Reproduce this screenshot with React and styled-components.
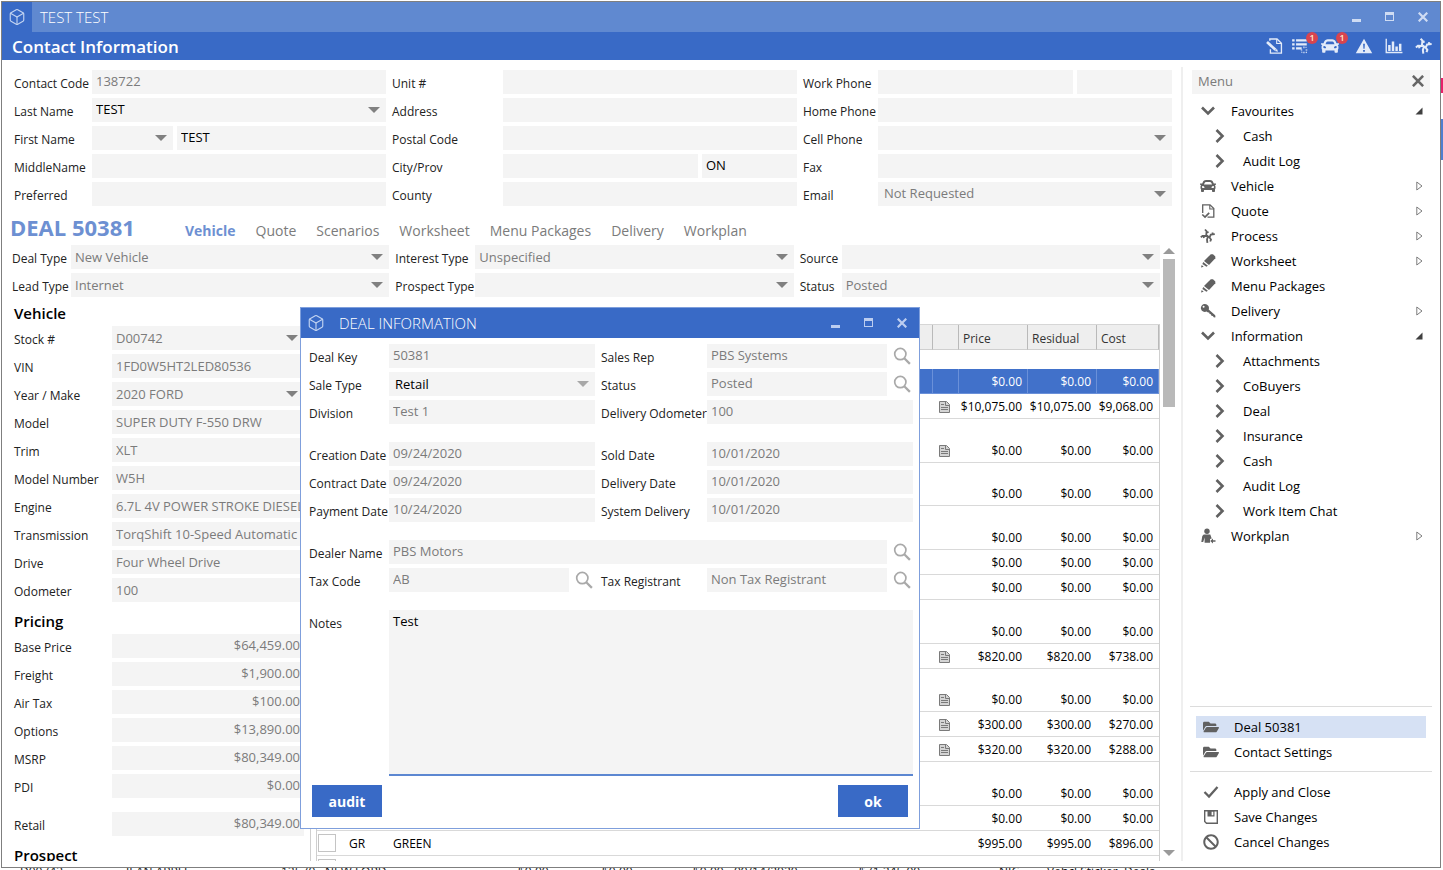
import React, { useId } from "react";
import styled, { createGlobalStyle, css } from "styled-components";
import { Box } from "lucide-react";
import { FaCar, FaFolderOpen, FaBan } from "react-icons/fa";

const BLUE = "#396ac6";
const FIELD = "#f4f4f4";
const MUTED = "#7b7b7b";

const GlobalStyle = createGlobalStyle`
  * { box-sizing: border-box; }
  html, body, #root { height: 100%; }
  body {
    margin: 0;
    background: #fff;
    color: #111;
    font-family: "Open Sans", "Noto Sans", sans-serif;
    font-size: 13px;
    line-height: 16px;
  }
  button, input, select, textarea { font: inherit; border: 0; border-radius: 0; margin: 0; padding: 0; }
  button { background: none; cursor: pointer; }
  svg { display: block; flex: none; }
`;

/* ---------- icons ---------- */

const Svg = ({ size = 16, children, ...rest }) => (
  <svg width={size} height={size} viewBox="0 0 16 16" fill="currentColor" aria-hidden="true" {...rest}>
    {children}
  </svg>
);

const ChevronDown = () => (
  <Svg>
    <path d="M2 4.5 8 10.5 14 4.5" fill="none" stroke="currentColor" strokeWidth="2.6" />
  </Svg>
);
const ChevronRight = () => (
  <Svg>
    <path d="M4.5 2 10.5 8 4.5 14" fill="none" stroke="currentColor" strokeWidth="2.6" />
  </Svg>
);
const PageCheck = () => (
  <Svg>
    <path d="M2.700 10V1.900H10L13.800 5.600V14.200H7.500" fill="none" stroke="currentColor" strokeWidth="1.300" />
    <path d="M9.800 2v4h4" fill="none" stroke="currentColor" strokeWidth="1.100" />
    <path d="M2.300 11.500 5 14 9.200 9.800" fill="none" stroke="currentColor" strokeWidth="1.700" />
  </Svg>
);
const PagePen = ({ size }) => (
  <Svg size={size}>
    <path d="M4.300 3.300V1.800H10.700L14.600 5.500V14.300H4.800V10.800" fill="none" stroke="currentColor" strokeWidth="1.200" />
    <path d="M10.400 1.800V5.800H14.400" fill="none" stroke="currentColor" strokeWidth="1" />
    <path d="M1.800 4.400 9.300 11.400" stroke="currentColor" strokeWidth="2.400" />
    <path d="M10.600 10.400 11.600 13.200 8.700 12.400Z" />
  </Svg>
);
const Process = ({ size }) => (
  <Svg size={size}>
    <path
      d="M5 1.500 6.600 3.200 6.200 7.500M6.600 4.600 8.600 4M.8 9.300 2.600 7.800 8 8M3.400 7.800 4 10M6.800 7.800 9.600 9.200 10.800 6.600 14.800 6.200M12.400 6.300 12.600 4.500M8 8.600 7 11.500 7.400 14.800M9.200 9 11 11.500 10.200 13.500"
      fill="none"
      stroke="currentColor"
      strokeWidth="1.800"
    />
  </Svg>
);
const Marker = () => (
  <Svg>
    <path d="M10.800 1.300H13L15.300 3.600V5.200L9 12 4 8Z" />
    <path d="M3.200 9 7.900 12.700 6.400 13.800 2.400 10.900Z" />
    <path d="M1.700 12.100 3.700 13.700 1 14.600Z" />
  </Svg>
);
const Key = () => (
  <Svg>
    <path
      fillRule="evenodd"
      d="M5 1a4 4 0 1 0 1.600 7.600L8 9.500 9.200 9.600 9.600 11 10.900 11.200 11.400 12.700 12.800 13 14 14.500 15.500 14.200 15.200 12.200 8.700 6.400A4 4 0 0 0 5 1ZM3.600 2.800a1 1 0 1 1 0 2 1 1 0 0 1 0-2Z"
    />
  </Svg>
);
const Person = () => (
  <Svg>
    <circle cx="7" cy="3.200" r="2.700" />
    <path d="M3.700 6.600H10.300L11.700 10.400 10 11V14.800H4.600V9.500L3.200 14H1.300L2.300 8Z" />
    <path d="M10.200 13 13 10.500V12.200H15.500V13.800H13V15.500Z" />
  </Svg>
);
const Tick = () => (
  <Svg>
    <path d="M1.500 8 6 12.500 14.500 3" fill="none" stroke="currentColor" strokeWidth="2.300" />
  </Svg>
);
const Floppy = () => (
  <Svg>
    <path d="M1.700 1.700H14.300V14.300H3.500L1.700 12.500Z" fill="none" stroke="currentColor" strokeWidth="1.400" />
    <path fillRule="evenodd" d="M4.500 1.500H11.500V7.500H4.500ZM8.600 2.500V6.200H10.300V2.500Z" />
  </Svg>
);
const Search = () => (
  <Svg size={18}>
    <circle cx="6.500" cy="6.300" r="5" fill="none" stroke="currentColor" strokeWidth="1.500" />
    <path d="M10 10 15 15" stroke="currentColor" strokeWidth="2" />
  </Svg>
);
const Note = () => (
  <svg width="11" height="12" viewBox="0 0 11 12" aria-hidden="true">
    <path d="M.5.5H7.500L10.500 3.500V11.500H.5Z" fill="#d4d4d4" stroke="#7a7a7a" />
    <path d="M2 3.500H5M2 6.500H9M2 8.500H9M6.500 1V4.500H10" fill="none" stroke="#7a7a7a" />
  </svg>
);
const ListIcon = () => (
  <Svg size={18}>
    <path d="M1 2H3.200V4H1ZM4.500 2H14V4H4.500ZM1 5.500H3.200V7.500H1ZM4.500 5.500H14V7.500H4.500ZM1 9H3.200V11H1ZM4.500 9H9.500V11H4.500Z" />
    <path d="M11.500 8.500V10M11.500 13V14.500M8.700 11.500H10M13 11.500H14.500M13 9.500 13.700 8.900M13.200 13.200 14 14M9.300 13.800 10 13.200" stroke="currentColor" fill="none" />
  </Svg>
);
const Warning = () => (
  <Svg size={18}>
    <path fillRule="evenodd" d="M8 1.500 15.300 14.500H.7ZM7.200 6 7.500 10.500H8.500L8.800 6ZM7.200 11.500V13H8.800V11.500Z" />
  </Svg>
);
const Bars = () => (
  <Svg size={18}>
    <path d="M.5 1.500H1.700V13.200H15.500V14.500H.5Z" />
    <path d="M2.800 7H5V12.400H2.800ZM6 4H8.200V12.400H6ZM9.200 8.500H11.400V12.400H9.200ZM12.400 6H14.600V12.400H12.400Z" />
  </Svg>
);
const Minimize = () => (
  <svg width="10" height="10" viewBox="0 0 10 10" fill="currentColor" aria-hidden="true">
    <path d="M0 7H9V10H0Z" />
  </svg>
);
const Maximize = () => (
  <svg width="10" height="10" viewBox="0 0 10 10" fill="currentColor" aria-hidden="true">
    <path fillRule="evenodd" d="M0 0H9V9H0ZM1 3V8H8V3Z" />
  </svg>
);
const Close = ({ size = 10 }) => (
  <svg width={size} height={size} viewBox="0 0 10 10" aria-hidden="true">
    <path d="M.7.7 9.300 9.300M9.300.7.7 9.300" stroke="currentColor" strokeWidth="2.200" />
  </svg>
);

/* ---------- application frame ---------- */

const Desktop = styled.div`
  position: relative;
  height: 100vh;
  min-height: 600px;
  padding: 1px 2px 2px 1px;
  background: #fff;
  overflow: hidden;
`;

const BackgroundRow = styled.div`
  position: absolute;
  left: 0;
  right: 0;
  bottom: 0;
  height: 2px;
  padding-left: 20px;
  overflow: hidden;
  display: flex;
  font-size: 12px;
  line-height: 8px;
  white-space: nowrap;
`;

const BackgroundCell = styled.span`
  flex: none;
  width: ${(p) => p.$w}px;
`;

const BackgroundEdge = styled.div`
  position: absolute;
  top: 78px;
  right: 0;
  width: 2px;
  display: flex;
  flex-direction: column;
  gap: 26px;
`;

const EdgeMark = styled.span`
  height: ${(p) => p.$h}px;
  background: ${(p) => p.$color};
`;

const Window = styled.div`
  position: relative;
  height: 100%;
  border: 1px solid #7f7f7f;
  background: #fff;
  display: flex;
  flex-direction: column;
`;

const TitleBar = styled.header`
  height: 30px;
  flex: none;
  display: flex;
  align-items: center;
  background: ${(p) => (p.$dialog ? BLUE : "#6089d0")};
  color: #fff;
  font-size: 15px;
  font-weight: 300;
`;

const Logo = styled.span`
  width: 30px;
  height: 30px;
  display: grid;
  place-items: center;
  background: ${BLUE};
  color: #c3d4f1;
`;

const TitleText = styled.span`
  flex: 1;
  padding-left: 8px;
`;

const WindowButtons = styled.div`
  display: flex;
  gap: 22px;
  padding-right: 11px;
  color: ${(p) => (p.$dialog ? "#bccdf0" : "#cfdcf3")};
  button { color: inherit; width: 11px; }
`;

const PageHeader = styled.div`
  height: 28px;
  flex: none;
  display: flex;
  align-items: center;
  justify-content: space-between;
  padding: 0 7px 0 10px;
  background: ${BLUE};
  color: #fff;
`;

const PageTitle = styled.h1`
  margin: 0;
  padding-top: 2px;
  font-size: 17px;
  line-height: 24px;
  font-weight: 600;
`;

const HeaderTools = styled.div`
  display: flex;
  gap: 12px;
  color: #e3ebf9;
`;

const ToolButton = styled.button`
  position: relative;
  color: inherit;
  width: ${(p) => (p.$badged ? 22 : 18)}px;
  height: 18px;
  && { margin-left: ${(p) => (p.$badged ? -4 : 0)}px; }
`;

const Badge = styled.span`
  position: absolute;
  top: -5px;
  left: 15px;
  width: 12px;
  height: 12px;
  border-radius: 6px;
  background: #d8454f;
  color: #ffe9d0;
  font-size: 9px;
  line-height: 12px;
  font-weight: 600;
  text-align: center;
`;

const Body = styled.div`
  flex: 1;
  min-height: 0;
  display: flex;
  padding: 7px 0 6px;
`;

const Main = styled.main`
  flex: 1;
  min-width: 0;
  display: flex;
  flex-direction: column;
  padding: 3px 6px 0 0;
`;

/* ---------- form parts ---------- */

const Groups = styled.div`
  display: flex;
  gap: 6px;
`;

const Group = styled.div`
  flex: 1 1 ${(p) => p.$label}px;
  min-width: 0;
  display: grid;
  grid-template-columns: ${(p) => p.$label}px minmax(0, 1fr);
  grid-auto-rows: 24px;
  row-gap: 4px;
`;

const Label = styled.label`
  padding-top: 6px;
  font-size: 12px;
  line-height: 16px;
  color: #222;
  white-space: nowrap;
`;

const Cells = styled.div`
  display: flex;
  gap: 4px;
  min-width: 0;
`;

const control = css`
  width: 100%;
  height: 24px;
  min-width: 0;
  padding: 0 4px ${(p) => (p.$right ? 3 : 1)}px;
  background: ${FIELD};
  color: ${(p) => (p.$dark ? "#000" : MUTED)};
  opacity: 1;
  text-align: ${(p) => (p.$right ? "right" : "left")};
  outline: none;
`;

const TextInput = styled.input`
  ${control}
`;

const SelectInput = styled.select`
  ${control}
  appearance: none;
  grid-area: 1 / 1;
  padding-left: ${(p) => (p.$inset ? 6 : 4)}px;
`;

const SelectBox = styled.div`
  display: grid;
  align-items: center;
  justify-items: end;
  width: 100%;
  svg {
    grid-area: 1 / 1;
    margin-right: 6px;
    pointer-events: none;
    color: ${(p) => (p.$light ? "#a8a8a8" : "#808080")};
  }
`;

const Cell = styled.div`
  flex: ${(p) => p.$flex || 1} 1 0;
  min-width: 0;
  display: flex;
`;

function Control({ id, name, value = "", select, dark, right, inset, light }) {
  if (!select) {
    return <TextInput id={id} aria-label={name} defaultValue={value} readOnly={!dark} $dark={dark} $right={right} />;
  }
  return (
    <SelectBox $light={light}>
      <SelectInput id={id} aria-label={name} defaultValue={value} $dark={dark} $inset={inset}>
        <option>{value}</option>
      </SelectInput>
      <svg width="12" height="6" viewBox="0 0 12 6" fill="currentColor" aria-hidden="true">
        <path d="M0 0H12L6 6Z" />
      </svg>
    </SelectBox>
  );
}

function Field({ label, cells, ...props }) {
  const id = useId();
  return (
    <>
      <Label htmlFor={id}>{label}</Label>
      {cells ? (
        <Cells>
          {cells.map((c, i) => (
            <Cell key={i} $flex={c.flex}>
              <Control id={i ? undefined : id} name={i ? c.name : undefined} {...c} />
            </Cell>
          ))}
        </Cells>
      ) : (
        <Control id={id} {...props} />
      )}
    </>
  );
}

const ContactForm = styled(Groups)`
  padding-left: 12px;
  padding-right: 3px;
  input, select { padding-bottom: 3px; }
`;

/* ---------- deal section ---------- */

const DealHeader = styled.div`
  display: flex;
  align-items: center;
  height: 39px;
  flex: none;
  padding: 2px 0 0 8px;
`;

const DealTitle = styled.h2`
  margin: 0;
  width: 175px;
  font-size: 22px;
  line-height: 30px;
  font-weight: 700;
  color: #6d90d2;
`;

const Tabs = styled.nav`
  display: flex;
  gap: 20px;
  padding-top: 8px;
`;

const Tab = styled.a`
  font-size: 14px;
  line-height: 20px;
  text-decoration: none;
  color: ${(p) => (p.$active ? "#6d90d2" : MUTED)};
  font-weight: ${(p) => (p.$active ? 700 : 400)};
`;

const ScrollRegion = styled.div`
  flex: 1;
  min-height: 0;
  display: flex;
  gap: 3px;
`;

const ScrollContent = styled.div`
  flex: 1;
  min-width: 0;
  overflow: hidden;
`;

const ScrollTrack = styled.div`
  width: 12px;
  flex: none;
  display: flex;
  flex-direction: column;
  align-items: center;
  padding: 3px 0 5px;
  color: #9a9a9a;
`;

const ScrollThumb = styled.div`
  width: 12px;
  height: 148px;
  margin: 5px 0 auto;
  background: #b9b9b9;
`;

const DealForm = styled(Groups)`
  padding-left: 10px;
`;

const DealBody = styled.div`
  display: flex;
  padding-top: 4px;
`;

const DetailPanel = styled.section`
  width: 308px;
  flex: none;
  padding: 0 6px 0 12px;
`;

const Splitter = styled.div`
  width: 1px;
  flex: none;
  margin-top: 23px;
  background: #cfcfcf;
`;

const SectionTitle = styled.h3`
  margin: 0;
  height: 25px;
  font-size: 15px;
  line-height: 24px;
  font-weight: 600;
  color: #000;
`;

const PanelFields = styled.div`
  display: grid;
  grid-template-columns: 98px minmax(0, 1fr);
  grid-auto-rows: 24px;
  row-gap: 4px;
  margin-bottom: ${(p) => p.$after || 7}px;
`;

const TablePanel = styled.section`
  flex: 1;
  min-width: 0;
  padding: 23px 0 0 5px;
`;

const Table = styled.table`
  width: 100%;
  table-layout: fixed;
  border-collapse: separate;
  border-spacing: 0;
  border: 1px solid #cfcfcf;
  border-top-color: #d6d6d6;
  font-size: 12px;
  line-height: 16px;
  color: #000;
`;

const HeadCell = styled.th`
  height: 25px;
  padding: 3px 4px 0;
  background: #eee;
  border-right: 1px solid #b9b9b9;
  border-bottom: 1px solid #cfcfcf;
  font-weight: 400;
  text-align: left;
  color: #333;
`;

const GapCell = styled.td`
  height: ${(p) => p.$h}px;
  padding: 0;
`;

const DataCell = styled.td`
  height: 25px;
  padding: 2px 6px 0 ${(p) => (p.$align ? 0 : 6)}px;
  text-align: ${(p) => p.$align || "left"};
  border-bottom: 1px solid #d9d9d9;
  ${(p) =>
    p.$selected &&
    css`
      background: #4171ca;
      color: #fff;
      border-right: 1px solid #6a90d9;
      border-bottom: 1px solid #6a90d9;
      padding-right: 5px;
    `}
`;

const CheckCell = styled(DataCell)`
  padding: 0 1px;
`;

const Check = styled.input`
  appearance: none;
  display: block;
  width: 18px;
  height: 18px;
  && { border: 1px solid #c4c4c4; }
  background: #fff;
`;

/* ---------- side menu ---------- */

const Side = styled.aside`
  width: 259px;
  flex: none;
  display: flex;
  flex-direction: column;
  border-left: 2px solid #efefef;
  padding: 3px 8px 0 7px;
`;

const MenuHead = styled.div`
  display: flex;
  align-items: center;
  justify-content: space-between;
  height: 24px;
  margin: 0 2px 4px;
  padding: 0 6px 2px;
  background: ${FIELD};
  color: ${MUTED};
  button { color: #666; }
`;

const MenuList = styled.nav`
  display: flex;
  flex-direction: column;
  padding: 0 6px;
`;

const MenuItem = styled.a`
  display: flex;
  align-items: center;
  height: ${(p) => (p.$selected ? 22 : 25)}px;
  margin: ${(p) => (p.$selected ? "2px 0 1px" : 0)};
  gap: 15px;
  padding-left: ${(p) => (p.$child ? 16 : 4)}px;
  padding-right: 3px;
  background: ${(p) => (p.$selected ? "#d6e1f4" : "none")};
  color: #000;
  text-decoration: none;
  > svg:first-child { color: #616161; }
  span { flex: 1; }
`;

const Bottom = styled.div`
  margin-top: auto;
`;

const ActionList = styled(MenuList)`
  border-top: 1px solid #dcdcdc;
  padding-top: 7px;
  padding-bottom: 7px;
  ${MenuItem} { padding-left: 7px; }
`;

const Expander = ({ open }) =>
  open ? (
    <svg width="8" height="8" viewBox="0 0 8 8" aria-hidden="true">
      <path d="M7.500.5V7.500H.5Z" fill="#404040" />
    </svg>
  ) : (
    <svg width="7" height="10" viewBox="0 0 7 10" aria-hidden="true">
      <path d="M.8 1 6 5 .8 9Z" fill="#fff" stroke="#7c7c7c" />
    </svg>
  );

/* ---------- dialog ---------- */

const Dialog = styled.div`
  position: absolute;
  left: 298px;
  top: 305px;
  width: 620px;
  max-width: 100%;
  border: 1px solid #7f9fdc;
  background: #fff;
  ${Logo} { background: none; }
`;

const DialogForm = styled.div`
  display: flex;
  flex-direction: column;
  gap: 18px;
  padding: 6px 6px 9px 8px;
  input { padding-bottom: 3px; }
`;

const Rows = styled.div`
  display: grid;
  grid-template-columns: 80px minmax(0, 212fr) 106px minmax(0, 206fr);
  grid-auto-rows: minmax(24px, auto);
  row-gap: 4px;
`;

const Lookup = styled.div`
  display: flex;
  align-items: center;
  gap: 6px;
  grid-column: ${(p) => (p.$wide ? "span 3" : "auto")};
  padding-right: ${(p) => (p.$inner ? 8 : 2)}px;
  button { color: #a9a9a9; width: 18px; height: 18px; flex: none; }
`;

const Inset = styled.div`
  padding-right: ${(p) => (p.$first ? 6 : 0)}px;
  display: flex;
  min-width: 0;
`;

const Notes = styled.textarea`
  grid-column: span 3;
  height: 166px;
  && { padding: 3px 4px; }
  resize: none;
  background: ${FIELD};
  && { border-bottom: 2px solid #5c87d1; }
  color: #000;
  outline: none;
`;

const DialogFooter = styled.footer`
  display: flex;
  justify-content: space-between;
  padding: 0 11px 11px;
`;

const PrimaryButton = styled.button`
  width: 70px;
  height: 32px;
  && { padding-top: 2px; }
  background: ${BLUE};
  color: #fff;
  font-size: 14px;
  font-weight: 700;
`;

function DialogField({ label, first, lookup, wide, ...props }) {
  const id = useId();
  return (
    <>
      <Label htmlFor={id}>{label}</Label>
      {lookup ? (
        <Lookup $wide={wide} $inner={first && !wide}>
          <Control id={id} {...props} />
          <button type="button" aria-label={"Find " + label}>
            <Search />
          </button>
        </Lookup>
      ) : (
        <Inset $first={first}>
          <Control id={id} {...props} />
        </Inset>
      )}
    </>
  );
}

/* ---------- data ---------- */

const MENU = [
  ["Favourites", ChevronDown, "open"],
  ["Cash", ChevronRight, "child"],
  ["Audit Log", ChevronRight, "child"],
  ["Vehicle", FaCar, "closed"],
  ["Quote", PageCheck, "closed"],
  ["Process", Process, "closed"],
  ["Worksheet", Marker, "closed"],
  ["Menu Packages", Marker],
  ["Delivery", Key, "closed"],
  ["Information", ChevronDown, "open"],
  ["Attachments", ChevronRight, "child"],
  ["CoBuyers", ChevronRight, "child"],
  ["Deal", ChevronRight, "child"],
  ["Insurance", ChevronRight, "child"],
  ["Cash", ChevronRight, "child"],
  ["Audit Log", ChevronRight, "child"],
  ["Work Item Chat", ChevronRight, "child"],
  ["Workplan", Person, "closed"],
];

const ZERO = ["$0.00", "$0.00", "$0.00"];
const ITEMS = [
  { gap: 19 },
  { prices: ZERO, selected: true },
  { prices: ["$10,075.00", "$10,075.00", "$9,068.00"], note: true },
  { gap: 19 },
  { prices: ZERO, note: true },
  { gap: 18 },
  { prices: ZERO },
  { gap: 19 },
  { prices: ZERO },
  { prices: ZERO },
  { prices: ZERO },
  { gap: 19 },
  { prices: ZERO },
  { prices: ["$820.00", "$820.00", "$738.00"], note: true },
  { gap: 18 },
  { prices: ZERO, note: true },
  { prices: ["$300.00", "$300.00", "$270.00"], note: true },
  { prices: ["$320.00", "$320.00", "$288.00"], note: true },
  { gap: 19 },
  { prices: ZERO },
  { prices: ZERO },
  { code: "GR", name: "GREEN", prices: ["$995.00", "$995.00", "$896.00"] },
  { prices: ["", "", ""] },
];

const VEHICLE = [
  ["Stock #", "D00742", true],
  ["VIN", "1FD0W5HT2LED80536"],
  ["Year / Make", "2020 FORD", true],
  ["Model", "SUPER DUTY F-550 DRW"],
  ["Trim", "XLT"],
  ["Model Number", "W5H"],
  ["Engine", "6.7L 4V POWER STROKE DIESEL"],
  ["Transmission", "TorqShift 10-Speed Automatic -"],
  ["Drive", "Four Wheel Drive"],
  ["Odometer", "100"],
];

const PRICING = [
  ["Base Price", "$64,459.00"],
  ["Freight", "$1,900.00"],
  ["Air Tax", "$100.00"],
  ["Options", "$13,890.00"],
  ["MSRP", "$80,349.00"],
  ["PDI", "$0.00"],
];

const TABS = ["Vehicle", "Quote", "Scenarios", "Worksheet", "Menu Packages", "Delivery", "Workplan"];

const BACKGROUND = [
  ["D00743", 106],
  ["JEAN APPLE", 155],
  ["12570", 44],
  ["NEW FORD", 193],
  ["$0.00", 84],
  ["$0.00", 91],
  ["$0.00", 41],
  ["09/14/2020", 125],
  ["$71,245.00", 140],
  ["NIC", 48],
  ["Vehcl Sticker", 77],
  ["Deals", 60],
];

function Controls({ dialog }) {
  return (
    <WindowButtons $dialog={dialog}>
      <button type="button" aria-label="Minimize"><Minimize /></button>
      <button type="button" aria-label="Maximize"><Maximize /></button>
      <button type="button" aria-label="Close"><Close /></button>
    </WindowButtons>
  );
}

function SideMenu() {
  return (
    <Side>
      <MenuHead>
        <span>Menu</span>
        <button type="button" aria-label="Close menu"><Close size={12} /></button>
      </MenuHead>
      <MenuList>
        {MENU.map(([text, Icon, kind], i) => (
          <MenuItem href="#" key={i} $child={kind === "child"}>
            <Icon size={16} />
            <span>{text}</span>
            {(kind === "open" || kind === "closed") && <Expander open={kind === "open"} />}
          </MenuItem>
        ))}
      </MenuList>
      <Bottom>
        <ActionList>
          <MenuItem href="#" $selected><FaFolderOpen size={16} /><span>Deal 50381</span></MenuItem>
          <MenuItem href="#"><FaFolderOpen size={16} /><span>Contact Settings</span></MenuItem>
        </ActionList>
        <ActionList>
          <MenuItem href="#"><Tick /><span>Apply and Close</span></MenuItem>
          <MenuItem href="#"><Floppy /><span>Save Changes</span></MenuItem>
          <MenuItem href="#"><FaBan size={16} /><span>Cancel Changes</span></MenuItem>
        </ActionList>
      </Bottom>
    </Side>
  );
}

function ItemTable() {
  return (
    <Table>
      <colgroup>
        <col width="26" />
        <col width="44" />
        <col />
        <col width="26" />
        <col width="69" />
        <col width="69" />
        <col width="62" />
      </colgroup>
      <thead>
        <tr>
          <HeadCell /><HeadCell /><HeadCell /><HeadCell />
          <HeadCell>Price</HeadCell>
          <HeadCell>Residual</HeadCell>
          <HeadCell>Cost</HeadCell>
        </tr>
      </thead>
      <tbody>
        {ITEMS.map((item, i) =>
          item.gap ? (
            <tr key={i}><GapCell colSpan={7} $h={item.gap} /></tr>
          ) : (
            <tr key={i}>
              <CheckCell $selected={item.selected}><Check type="checkbox" aria-label="Select item" /></CheckCell>
              <DataCell $selected={item.selected}>{item.code}</DataCell>
              <DataCell $selected={item.selected}>{item.name}</DataCell>
              <DataCell $selected={item.selected}>{item.note && <Note />}</DataCell>
              {item.prices.map((p, n) => (
                <DataCell key={n} $align="right" $selected={item.selected}>{p}</DataCell>
              ))}
            </tr>
          )
        )}
      </tbody>
    </Table>
  );
}

function DealInformation() {
  const notesId = useId();
  return (
    <Dialog role="dialog" aria-label="Deal information">
      <TitleBar $dialog>
        <Logo><Box size={18} strokeWidth={1.5} /></Logo>
        <TitleText>DEAL INFORMATION</TitleText>
        <Controls dialog />
      </TitleBar>
      <DialogForm>
        <Rows>
          <DialogField label="Deal Key" value="50381" first />
          <DialogField label="Sales Rep" value="PBS Systems" lookup />
          <DialogField label="Sale Type" value="Retail" select dark inset light first />
          <DialogField label="Status" value="Posted" lookup />
          <DialogField label="Division" value="Test 1" first />
          <DialogField label="Delivery Odometer" value="100" />
        </Rows>
        <Rows>
          <DialogField label="Creation Date" value="09/24/2020" first />
          <DialogField label="Sold Date" value="10/01/2020" />
          <DialogField label="Contract Date" value="09/24/2020" first />
          <DialogField label="Delivery Date" value="10/01/2020" />
          <DialogField label="Payment Date" value="10/24/2020" first />
          <DialogField label="System Delivery" value="10/01/2020" />
        </Rows>
        <Rows>
          <DialogField label="Dealer Name" value="PBS Motors" lookup wide first />
          <DialogField label="Tax Code" value="AB" lookup first />
          <DialogField label="Tax Registrant" value="Non Tax Registrant" lookup />
        </Rows>
        <Rows>
          <Label htmlFor={notesId}>Notes</Label>
          <Notes id={notesId} defaultValue="Test" />
        </Rows>
      </DialogForm>
      <DialogFooter>
        <PrimaryButton type="button">audit</PrimaryButton>
        <PrimaryButton type="button">ok</PrimaryButton>
      </DialogFooter>
    </Dialog>
  );
}

export default function App() {
  return (
    <Desktop>
      <GlobalStyle />
      <BackgroundRow aria-hidden="true">
        {BACKGROUND.map(([text, width], i) => (
          <BackgroundCell key={i} $w={width}>{text}</BackgroundCell>
        ))}
      </BackgroundRow>
      <BackgroundEdge aria-hidden="true">
        <EdgeMark $h={15} $color="#e8206a" />
        <EdgeMark $h={41} $color="#4f7fcf" />
      </BackgroundEdge>
      <Window>
        <TitleBar>
          <Logo><Box size={18} strokeWidth={1.5} /></Logo>
          <TitleText>TEST TEST</TitleText>
          <Controls />
        </TitleBar>
        <PageHeader>
          <PageTitle>Contact Information</PageTitle>
          <HeaderTools>
            <ToolButton type="button" aria-label="Edit notes"><PagePen size={18} /></ToolButton>
            <ToolButton $badged type="button" aria-label="Tasks"><ListIcon /><Badge>1</Badge></ToolButton>
            <ToolButton $badged type="button" aria-label="Vehicles"><FaCar size={18} /><Badge>1</Badge></ToolButton>
            <ToolButton type="button" aria-label="Warnings"><Warning /></ToolButton>
            <ToolButton type="button" aria-label="Statistics"><Bars /></ToolButton>
            <ToolButton type="button" aria-label="Process"><Process size={18} /></ToolButton>
          </HeaderTools>
        </PageHeader>
        <Body>
          <Main>
            <ContactForm>
              <Group $label={78}>
                <Field label="Contact Code" value="138722" />
                <Field label="Last Name" value="TEST" select dark />
                <Field
                  label="First Name"
                  cells={[{ select: true, flex: 81 }, { name: "Given name", value: "TEST", dark: true, flex: 209 }]}
                />
                <Field label="MiddleName" />
                <Field label="Preferred" />
              </Group>
              <Group $label={111}>
                <Field label="Unit #" />
                <Field label="Address" />
                <Field label="Postal Code" />
                <Field label="City/Prov" cells={[{ flex: 195 }, { name: "Province", value: "ON", dark: true, flex: 95 }]} />
                <Field label="County" />
              </Group>
              <Group $label={75}>
                <Field label="Work Phone" cells={[{ flex: 195 }, { name: "Extension", flex: 95 }]} />
                <Field label="Home Phone" />
                <Field label="Cell Phone" select />
                <Field label="Fax" />
                <Field label="Email" value="Not Requested" select inset />
              </Group>
            </ContactForm>
            <DealHeader>
              <DealTitle>DEAL 50381</DealTitle>
              <Tabs>
                {TABS.map((t, i) => (
                  <Tab href="#" key={t} $active={i === 0}>{t}</Tab>
                ))}
              </Tabs>
            </DealHeader>
            <ScrollRegion>
              <ScrollContent>
                <DealForm>
                  <Group $label={59}>
                    <Field label="Deal Type" value="New Vehicle" select />
                    <Field label="Lead Type" value="Internet" select />
                  </Group>
                  <Group $label={80}>
                    <Field label="Interest Type" value="Unspecified" select />
                    <Field label="Prospect Type" select />
                  </Group>
                  <Group $label={42}>
                    <Field label="Source" select />
                    <Field label="Status" value="Posted" select />
                  </Group>
                </DealForm>
                <DealBody>
                  <DetailPanel>
                    <SectionTitle>Vehicle</SectionTitle>
                    <PanelFields>
                      {VEHICLE.map(([label, value, select]) => (
                        <Field key={label} label={label} value={value} select={select} />
                      ))}
                    </PanelFields>
                    <SectionTitle>Pricing</SectionTitle>
                    <PanelFields $after={14}>
                      {PRICING.map(([label, value]) => (
                        <Field key={label} label={label} value={value} right />
                      ))}
                    </PanelFields>
                    <PanelFields>
                      <Field label="Retail" value="$80,349.00" right />
                    </PanelFields>
                    <SectionTitle>Prospect</SectionTitle>
                  </DetailPanel>
                  <Splitter />
                  <TablePanel>
                    <ItemTable />
                  </TablePanel>
                </DealBody>
              </ScrollContent>
              <ScrollTrack aria-hidden="true">
                <svg width="12" height="6" viewBox="0 0 12 6" fill="currentColor"><path d="M0 6H12L6 0Z" /></svg>
                <ScrollThumb />
                <svg width="12" height="6" viewBox="0 0 12 6" fill="currentColor"><path d="M0 0H12L6 6Z" /></svg>
              </ScrollTrack>
            </ScrollRegion>
          </Main>
          <SideMenu />
        </Body>
        <DealInformation />
      </Window>
    </Desktop>
  );
}
